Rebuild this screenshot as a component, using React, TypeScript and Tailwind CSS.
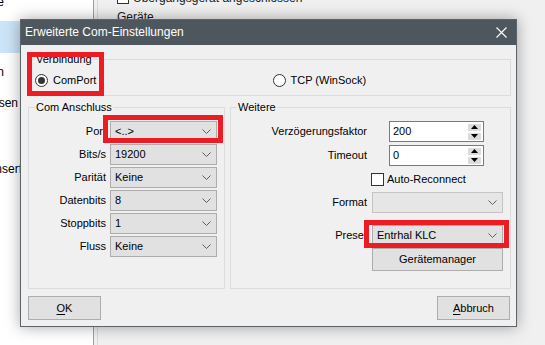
import React from "react";

const Chevron = () => (
  <svg width="9" height="5" viewBox="0 0 9 5" className="shrink-0">
    <path d="M0.5 0.5 L4.5 4.5 L8.5 0.5" fill="none" stroke="#5f5f5f" strokeWidth="1" />
  </svg>
);

const Dropdown = ({ value, className = "" }: { value?: string; className?: string }) => (
  <div
    className={`flex h-[21px] items-center justify-between border border-[#adadad] bg-[#e1e1e1] pl-[4px] pr-[5px] ${className}`}
  >
    <span className="whitespace-nowrap">{value}</span>
    <Chevron />
  </div>
);

const Radio = ({ checked, label }: { checked?: boolean; label: string }) => (
  <div className="flex items-center gap-[5px]">
    <div className="flex h-[13px] w-[13px] items-center justify-center rounded-full border border-[#333333] bg-white">
      {checked && <div className="h-[7px] w-[7px] rounded-full bg-[#333333]" />}
    </div>
    <span>{label}</span>
  </div>
);

const SpinBox = ({ value }: { value: string }) => (
  <div className="ml-[22px] flex h-[21px] w-[95px] items-center justify-between border border-[#7a7a7a] bg-white pl-[3px] pr-[2px]">
    <span>{value}</span>
    <div className="flex flex-col gap-[2px]">
      <div className="flex h-[7px] w-[13px] items-center justify-center bg-[#dcdcdc]">
        <svg width="7" height="4" viewBox="0 0 7 4">
          <path d="M0 4 L3.5 0 L7 4 Z" fill="#000" />
        </svg>
      </div>
      <div className="flex h-[7px] w-[13px] items-center justify-center bg-[#dcdcdc]">
        <svg width="7" height="4" viewBox="0 0 7 4">
          <path d="M0 0 L3.5 4 L7 0 Z" fill="#000" />
        </svg>
      </div>
    </div>
  </div>
);

const portRows = [
  { label: "Port", value: "<..>" },
  { label: "Bits/s", value: "19200" },
  { label: "Parität", value: "Keine" },
  { label: "Datenbits", value: "8" },
  { label: "Stoppbits", value: "1" },
  { label: "Fluss", value: "Keine" },
];

const Clipped = ({ text, width, className = "" }: { text: string; width: number; className?: string }) => (
  <div className={`flex justify-end overflow-hidden whitespace-nowrap ${className}`} style={{ width }}>
    <span>{text}</span>
  </div>
);

export default function App() {
  return (
    <div className="relative h-[345px] w-[545px] overflow-hidden bg-[#f0f0f0] font-['Liberation_Sans',Arial,sans-serif] text-[11px] leading-[13px] text-black">
      {/* window behind the dialog */}
      <div className="flex h-full">
        <div className="flex w-[93px] flex-col bg-white text-[12px] leading-[14px]">
          <Clipped text="Übersicht je" width={4} className="-mt-[5px] h-[14px]" />
          <div className="mt-[12px] h-[32px] bg-[#cce4f7]" />
          <Clipped text="Einstellungen" width={4} className="mt-[12px] h-[14px] items-end" />
          <Clipped text="Anpassen" width={18} className="mt-[17px] h-[14px]" />
          <Clipped text="Dateiexport Konserf" width={22} className="mt-[52px] h-[14px]" />
        </div>
        <div className="w-px bg-[#a0a0a0]" />
        <div className="w-[3px] bg-[#f0f0f0]" />
        <div className="w-px bg-[#dadada]" />
        <div className="flex flex-1 flex-col pl-[19px] text-[12px] leading-[14px] text-[#1a1a1a]">
          <div className="-mt-[9px] flex items-center gap-[4px]">
            <div className="h-[12px] w-[12px] border border-[#333333] bg-white" />
            <span>Übergangsgerät angeschlossen</span>
          </div>
          <div className="mt-[5px]">Geräte</div>
        </div>
      </div>

      {/* dialog */}
      <div className="absolute left-[20px] top-[19px] flex h-[308px] w-[497px] flex-col border border-[#5c6369] bg-[#f0f0f0] shadow-[0_0_14px_rgba(0,0,0,0.35)]">
        <div className="flex h-[25px] items-center justify-between bg-[#4f575e] pl-[4px] pr-[9px] text-[12px] text-white">
          <span>Erweiterte Com-Einstellungen</span>
          <svg width="11" height="11" viewBox="0 0 11 11">
            <path d="M0.5 0.5 L10.5 10.5 M10.5 0.5 L0.5 10.5" stroke="#ffffff" strokeWidth="1.1" />
          </svg>
        </div>

        <div className="flex flex-1 flex-col pl-[7px] pr-[5px] pb-[6px]">
          <fieldset className="mt-[8px] h-[43px] border border-[#dcdcdc]">
            <legend className="ml-[6px] px-px leading-[13px]">Verbindung</legend>
            <div className="grid h-[28px] grid-cols-2 items-center pl-[6px]">
              <Radio checked label="ComPort" />
              <Radio label="TCP (WinSock)" />
            </div>
          </fieldset>

          <div className="mt-[5px] flex h-[188px] gap-[5px]">
            <fieldset className="w-[197px] border border-[#dcdcdc]">
              <legend className="ml-[6px] px-px leading-[13px]">Com Anschluss</legend>
              <div className="flex flex-col gap-[2px] pt-[7px]">
                {portRows.map((r) => (
                  <div key={r.label} className="flex h-[21px] items-center">
                    <span className="w-[77px] text-right">{r.label}</span>
                    <Dropdown value={r.value} className="ml-[4px] w-[107px]" />
                  </div>
                ))}
              </div>
            </fieldset>

            <fieldset className="flex-1 border border-[#dcdcdc]">
              <legend className="ml-[6px] px-px leading-[13px]">Weitere</legend>
              <div className="flex flex-col">
                <div className="mt-[7px] flex h-[21px] items-center">
                  <span className="w-[136px] text-right">Verzögerungsfaktor</span>
                  <SpinBox value="200" />
                </div>
                <div className="mt-[3px] flex h-[21px] items-center">
                  <span className="w-[136px] text-right">Timeout</span>
                  <SpinBox value="0" />
                </div>
                <div className="mt-[7px] flex h-[13px] items-center pl-[140px]">
                  <div className="h-[13px] w-[13px] border border-[#333333] bg-white" />
                  <span className="ml-[3px]">Auto-Reconnect</span>
                </div>
                <div className="mt-[6px] flex h-[21px] items-center">
                  <span className="w-[136px] text-right">Format</span>
                  <Dropdown className="ml-[5px] w-[131px] border-[#c4c4c4] bg-[#e6e6e6]" />
                </div>
                <div className="mt-[12px] flex h-[21px] items-center">
                  <span className="w-[136px] text-right">Preset</span>
                  <Dropdown value="Entrhal KLC" className="ml-[5px] w-[131px]" />
                </div>
                <div className="mt-[2px] flex h-[23px] pl-[141px]">
                  <button className="w-[131px] border border-[#adadad] bg-[#e1e1e1]">Gerätemanager</button>
                </div>
              </div>
            </fieldset>
          </div>

          <div className="mt-[7px] flex justify-between pr-px">
            <button className="h-[24px] w-[73px] border border-[#adadad] bg-[#e1e1e1]">
              <span className="underline underline-offset-2">O</span>K
            </button>
            <button className="h-[24px] w-[73px] border border-[#adadad] bg-[#e1e1e1]">
              <span className="underline underline-offset-2">A</span>bbruch
            </button>
          </div>
        </div>
      </div>

      {/* red annotation boxes */}
      <div className="absolute left-[27px] top-[52px] h-[44px] w-[77px] border-[5px] border-[#ed1c24]" />
      <div className="absolute left-[103px] top-[115px] h-[28px] w-[120px] border-[5px] border-[#ed1c24]" />
      <div className="absolute left-[364px] top-[220px] h-[28px] w-[145px] border-[5px] border-[#ed1c24]" />
    </div>
  );
}
